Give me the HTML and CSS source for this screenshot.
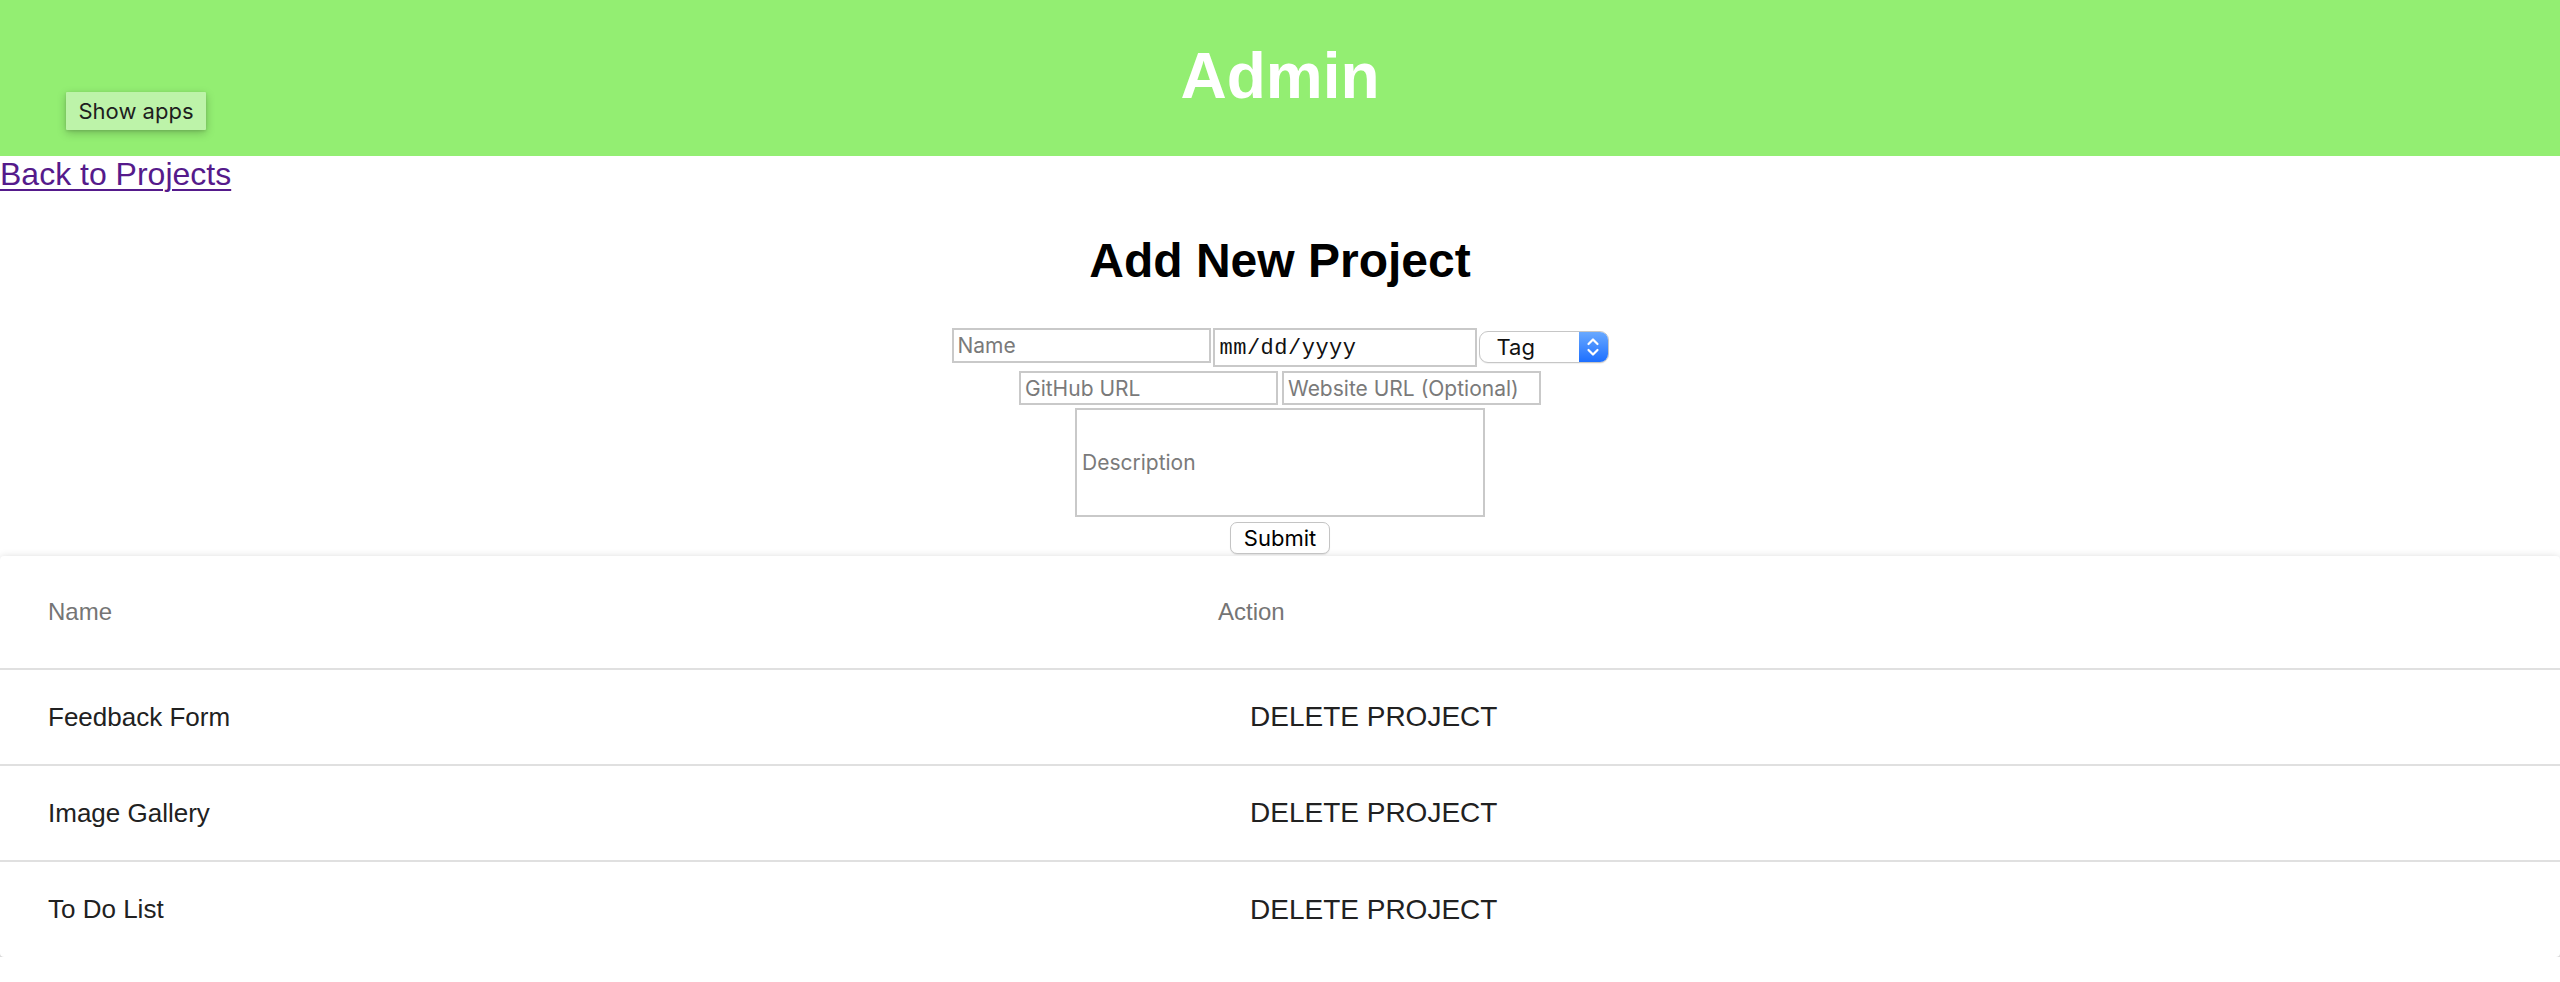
FILE: index.html
```html
<!DOCTYPE html>
<html lang="en">
<head>
<meta charset="utf-8">
<title>Admin</title>
<link rel="stylesheet" href="styles.css">
</head>
<body>
<header class="topbar">
  <div class="topbar-left"><button class="show-apps">Show apps</button></div>
  <h1 class="title">Admin</h1>
  <div class="topbar-right"></div>
</header>
<div class="back-line"><a class="back-link" href="#">Back to Projects</a></div>
<h2 class="section-title">Add New Project</h2>
<form class="project-form">
  <div class="form-row row-one">
    <input class="field field-name" type="text" placeholder="Name">
    <input class="field field-date" type="text" value="mm/dd/yyyy">
    <div class="select">
      <span class="select-label">Tag</span>
      <span class="select-stepper">
        <svg width="14" height="22" viewBox="0 0 14 22"><path d="M2.5 8 L7 3.5 L11.5 8" fill="none" stroke="#fff" stroke-width="2.2" stroke-linecap="round" stroke-linejoin="round"/><path d="M2.5 14 L7 18.5 L11.5 14" fill="none" stroke="#fff" stroke-width="2.2" stroke-linecap="round" stroke-linejoin="round"/></svg>
      </span>
    </div>
  </div>
  <div class="form-row row-two">
    <input class="field field-url" type="text" placeholder="GitHub URL">
    <input class="field field-url" type="text" placeholder="Website URL (Optional)">
  </div>
  <div class="form-row row-three">
    <input class="field field-desc" type="text" placeholder="Description">
  </div>
  <div class="form-row row-four">
    <button class="submit" type="button">Submit</button>
  </div>
</form>
<div class="card">
  <table class="projects">
    <colgroup><col class="col-name"><col class="col-action"></colgroup>
    <thead>
      <tr class="head-row"><th>Name</th><th>Action</th></tr>
    </thead>
    <tbody>
      <tr class="body-row"><td>Feedback Form</td><td><button class="delete" type="button">DELETE PROJECT</button></td></tr>
      <tr class="body-row"><td>Image Gallery</td><td><button class="delete" type="button">DELETE PROJECT</button></td></tr>
      <tr class="body-row last"><td>To Do List</td><td><button class="delete" type="button">DELETE PROJECT</button></td></tr>
    </tbody>
  </table>
</div>
</body>
</html>
```
FILE: styles.css
```css
html, body {
  margin: 0;
  padding: 0;
  background: #ffffff;
}
body {
  font-family: "Liberation Sans", Arial, sans-serif;
  color: #000;
}

/* Top bar */
.topbar {
  height: 156px;
  background: #93ee72;
  display: grid;
  grid-template-columns: 1fr auto 1fr;
  align-items: start;
}
.topbar-left {
  display: flex;
  align-items: flex-start;
}
.show-apps {
  margin: 92px 0 0 66px;
  width: 140px;
  height: 38px;
  border: 0;
  border-radius: 1px;
  background: #bdf3a9;
  box-shadow: 0 3px 10px rgba(0, 0, 0, 0.22), 0 1px 3px rgba(0, 0, 0, 0.12);
  font-family: Inter, "Noto Sans", sans-serif;
  font-size: 22px;
  color: #1e1e1e;
  padding: 0;
}
.title {
  margin: 39px 0 0;
  font-size: 64px;
  line-height: 74px;
  font-weight: bold;
  color: #ffffff;
}

/* Back link */
.back-line {
  font-size: 32px;
  line-height: 37px;
}
.back-link {
  color: #551a8b;
  text-decoration: underline;
  text-decoration-thickness: 2px;
  text-underline-offset: 4px;
}

/* Heading */
.section-title {
  margin: 40px 0 40px;
  text-align: center;
  font-size: 48px;
  line-height: 55px;
  font-weight: bold;
}

/* Form */
.project-form {
  display: flex;
  flex-direction: column;
  align-items: center;
}
.form-row {
  display: flex;
  justify-content: center;
  align-items: flex-start;
  gap: 2px;
}
.row-two { margin-top: 4px; gap: 4px; }
.row-three { margin-top: 3px; }
.row-four { margin-top: 5px; }

.field {
  box-sizing: border-box;
  margin: 0;
  border: 2px solid #c9c9c9;
  border-radius: 0;
  background: #fff;
  padding: 0 4px;
  font-family: Inter, "Noto Sans", sans-serif;
  font-size: 21px;
  color: #000;
  outline: none;
}
.field::placeholder {
  color: #7a7a7a;
  opacity: 1;
}
.field-name {
  width: 259px;
  height: 35px;
}
.field-date {
  width: 264px;
  height: 39px;
  font-family: "Liberation Mono", "Courier New", monospace;
  font-size: 22px;
  padding: 2px 5px 0;
  letter-spacing: 0.5px;
  color: #111;
}
.field-url {
  width: 259px;
  height: 34px;
}
.field-desc {
  width: 410px;
  height: 109px;
  padding: 0 5px;
}

.select {
  box-sizing: border-box;
  margin-top: 3px;
  width: 130px;
  height: 32px;
  border: 1px solid #c6c6c6;
  border-radius: 9px;
  background: #fff;
  display: flex;
  align-items: stretch;
  overflow: hidden;
  box-shadow: 0 1px 1px rgba(0, 0, 0, 0.06);
}
.select-label {
  flex: 1;
  padding-left: 17px;
  font-family: Inter, "Noto Sans", sans-serif;
  font-size: 22px;
  line-height: 30px;
  color: #111;
}
.select-stepper {
  width: 29px;
  display: flex;
  align-items: center;
  justify-content: center;
  background: linear-gradient(#69a9ff, #1d6fff);
}

.submit {
  box-sizing: border-box;
  width: 100px;
  height: 32px;
  margin: 0;
  border: 1px solid #c4c4c4;
  border-radius: 7px;
  background: #fff;
  box-shadow: 0 1px 1px rgba(0, 0, 0, 0.08);
  font-family: Inter, "Noto Sans", sans-serif;
  font-size: 22px;
  color: #000;
  padding: 0;
}

/* Table card */
.card {
  margin-top: 2px;
  background: #fff;
  border-radius: 4px;
  box-shadow: 0 2px 10px 0 rgba(0, 0, 0, 0.2), 0 4px 4px 0 rgba(0, 0, 0, 0.14), 0 6px 2px -4px rgba(0, 0, 0, 0.12);
  overflow: hidden;
}
.projects {
  width: 100%;
  border-collapse: collapse;
  table-layout: fixed;
}
.col-name { width: 1170px; }
.projects th,
.projects td {
  text-align: left;
  vertical-align: middle;
  padding: 0 48px;
  border-bottom: 2px solid #e0e0e0;
}
.projects th {
  height: 112px;
  font-size: 24px;
  font-weight: normal;
  color: #757575;
}
.projects td {
  height: 94px;
  font-size: 26px;
  color: #212121;
}
.projects .last td {
  border-bottom: 0;
  height: 95px;
}
.delete {
  margin: 0;
  border: 0;
  background: transparent;
  padding: 0 32px;
  font-family: "Liberation Sans", Arial, sans-serif;
  font-size: 28px;
  color: #212121;
}
```
